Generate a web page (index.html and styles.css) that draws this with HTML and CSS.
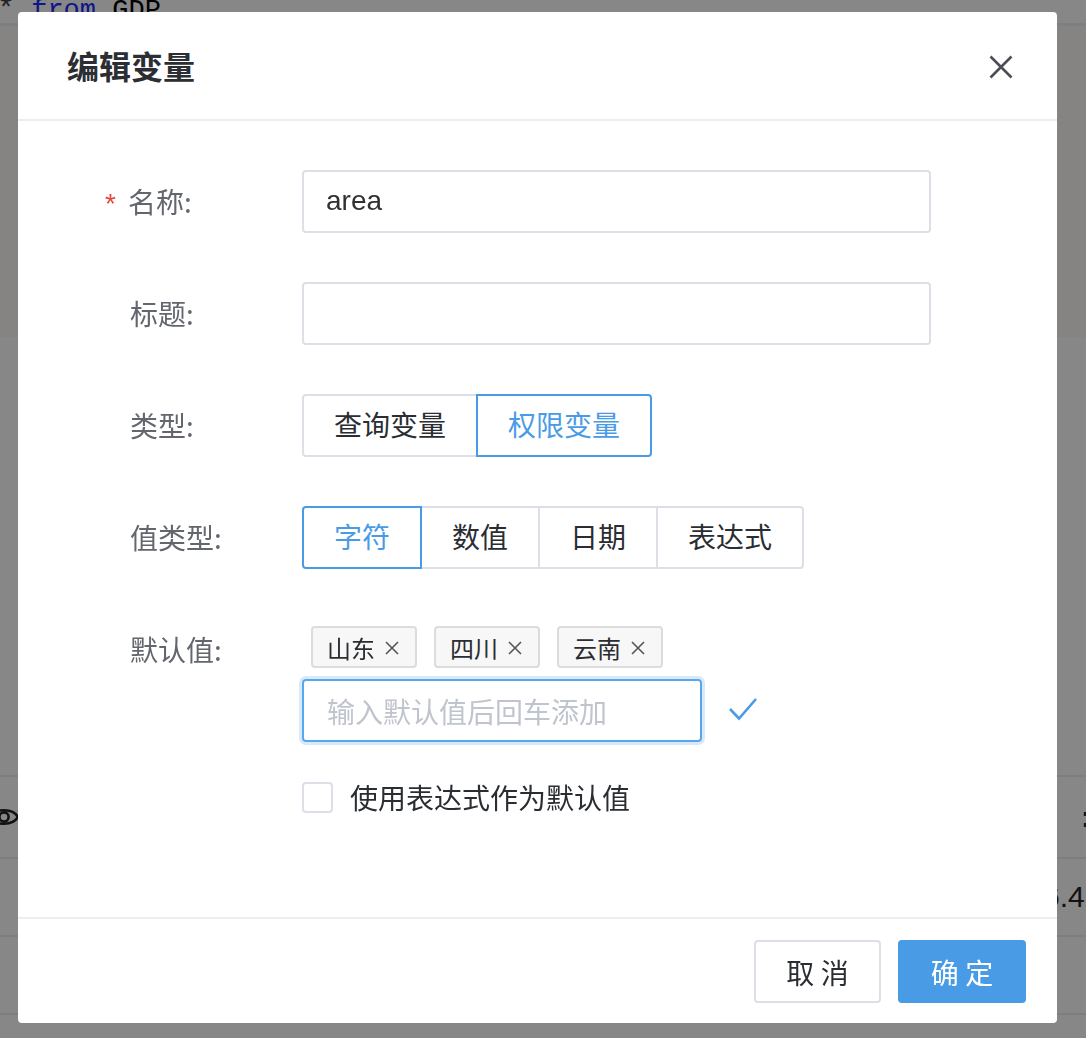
FILE: index.html
```html
<!DOCTYPE html>
<html lang="zh-CN">
<head>
<meta charset="utf-8">
<title>编辑变量</title>
<link rel="stylesheet" href="styles.css">
</head>
<body>
<div class="page">
  <div class="code"><div class="code-line"><span class="star">*</span> <span class="kw">from</span> GDP</div></div>
  <div class="upper"></div>
  <div class="table">
    <div class="trow first">
      <div class="cell-left">
        <svg class="eye" width="30" height="26" viewBox="0 0 30 26"><path d="M1 13 C6 4 24 4 29 13 C24 22 6 22 1 13 Z" fill="none" stroke="#222" stroke-width="2.6"/><circle cx="15" cy="13" r="4.6" fill="none" stroke="#222" stroke-width="2.6"/></svg>
      </div>
      <div class="cell-right"><span class="mark">:</span></div>
    </div>
    <div class="trow">
      <div class="cell-left"></div>
      <div class="cell-right"><span class="num">6.45</span></div>
    </div>
    <div class="trow"><div class="cell-left"></div><div class="cell-right"></div></div>
    <div class="trow last"><div class="cell-left"></div><div class="cell-right"></div></div>
  </div>
</div>

<div class="mask">
  <div class="dialog">
    <div class="dlg-header">
      <span class="dlg-title">编辑变量</span>
      <svg class="close" width="24" height="24" viewBox="0 0 24 24"><path d="M1.5 1.5 L22.5 22.5 M22.5 1.5 L1.5 22.5" stroke="#4a4f56" stroke-width="2.6" fill="none"/></svg>
    </div>

    <div class="dlg-body">
      <div class="form-row">
        <div class="label"><span class="req">*</span>名称:</div>
        <div class="control"><div class="input"><span class="val">area</span></div></div>
      </div>
      <div class="form-row">
        <div class="label">标题:</div>
        <div class="control"><div class="input"></div></div>
      </div>
      <div class="form-row">
        <div class="label">类型:</div>
        <div class="control">
          <div class="seg">
            <span class="seg-btn">查询变量</span>
            <span class="seg-btn active">权限变量</span>
          </div>
        </div>
      </div>
      <div class="form-row">
        <div class="label">值类型:</div>
        <div class="control">
          <div class="seg">
            <span class="seg-btn active">字符</span>
            <span class="seg-btn">数值</span>
            <span class="seg-btn">日期</span>
            <span class="seg-btn">表达式</span>
          </div>
        </div>
      </div>
      <div class="form-row">
        <div class="label">默认值:</div>
        <div class="control">
          <div class="tags">
            <span class="tag">山东<svg class="tag-x" width="14" height="14" viewBox="0 0 14 14"><path d="M1 1 L13 13 M13 1 L1 13" stroke="#555" stroke-width="1.6"/></svg></span>
            <span class="tag">四川<svg class="tag-x" width="14" height="14" viewBox="0 0 14 14"><path d="M1 1 L13 13 M13 1 L1 13" stroke="#555" stroke-width="1.6"/></svg></span>
            <span class="tag">云南<svg class="tag-x" width="14" height="14" viewBox="0 0 14 14"><path d="M1 1 L13 13 M13 1 L1 13" stroke="#555" stroke-width="1.6"/></svg></span>
          </div>
          <div class="add-row">
            <div class="input focus"><span class="placeholder">输入默认值后回车添加</span></div>
            <svg class="check" width="30" height="26" viewBox="0 0 30 26"><path d="M2 13 L11 22.5 L28 3" stroke="#4a9be6" stroke-width="2.6" fill="none"/></svg>
          </div>
          <div class="check-row">
            <span class="checkbox"></span>
            <span class="check-label">使用表达式作为默认值</span>
          </div>
        </div>
      </div>
    </div>

    <div class="dlg-footer">
      <span class="btn">取 消</span>
      <span class="btn primary">确 定</span>
    </div>
  </div>
</div>
</body>
</html>
```

FILE: styles.css
```css
* { box-sizing: border-box; }

html, body {
  margin: 0;
  padding: 0;
  width: 1086px;
  height: 1038px;
  overflow: hidden;
  background: #fff;
  font-family: "Liberation Sans", "Noto Sans CJK SC", sans-serif;
}

/* ---------- background page ---------- */
.page {
  width: 1140px;
  height: 1038px;
  overflow: hidden;
}

.code {
  height: 26px;
  border-bottom: 3px solid #f0f0f0;
  overflow: hidden;
}
.code-line {
  margin-top: -5px;
  margin-left: -3px;
  font-family: "Liberation Mono", monospace;
  font-size: 27px;
  line-height: 30px;
  color: #000;
  white-space: pre;
}
.code .star { color: #444; font-size: 30px; }
.code .kw { color: #1a2dff; }

.upper {
  height: 311px;
  background: #fdf9f6;
}

.table {
  margin-top: 438px;
}

.trow {
  display: grid;
  grid-template-columns: 1053px 1fr;
  border-top: 2px solid #eceef2;
  height: 78px;
}
.trow.first { height: 82px; }
.trow.last { height: 30px; }

.cell-left {
  display: flex;
  align-items: center;
}
.eye {
  margin-left: -11px;
}
.cell-right {
  display: flex;
  align-items: center;
  font-size: 30px;
  color: #222;
}
.mark {
  margin-left: 28px;
  font-weight: bold;
}
.num {
  margin-left: -10px;
}

/* ---------- mask & dialog ---------- */
.mask {
  position: fixed;
  inset: 0;
  background: rgba(0, 0, 0, 0.47);
  padding: 12px 29px 15px 18px;
}

.dialog {
  width: 1039px;
  height: 1011px;
  background: #fff;
  border-radius: 4px;
  display: flex;
  flex-direction: column;
}

.dlg-header {
  height: 109px;
  border-bottom: 2px solid #eeeeee;
  display: flex;
  align-items: center;
  justify-content: space-between;
  padding: 0 44px 0 49px;
}
.dlg-title {
  font-size: 32px;
  font-weight: 600;
  color: #2b2f33;
  font-family: "Noto Sans CJK SC", sans-serif;
  margin-top: -2px;
}
.close { margin-top: 2px; }

.dlg-body {
  padding: 49px 0 0 112px;
}

.form-row {
  display: flex;
  align-items: flex-start;
  margin-bottom: 49px;
}

.label {
  width: 172px;
  height: 63px;
  line-height: 63px;
  font-size: 28px;
  color: #63676d;
  font-family: "Noto Sans CJK SC", sans-serif;
  white-space: nowrap;
}
.req {
  color: #e5483a;
  margin-left: -25px;
  margin-right: 12px;
  font-family: "Liberation Sans", sans-serif;
  font-size: 28px;
}

.control {
  display: flex;
  flex-direction: column;
}

.input {
  width: 629px;
  height: 63px;
  border: 2px solid #dcdfe6;
  border-radius: 4px;
  display: flex;
  align-items: center;
  padding: 0 22px;
  font-size: 28px;
  color: #303133;
}
.val { margin-top: -2px; }

.input.focus {
  width: 400px;
  border-color: #58a6ec;
  box-shadow: 0 0 0 3px #d8e9fb;
}
.placeholder {
  color: #c0c4cc;
  font-family: "Noto Sans CJK SC", sans-serif;
  margin-left: 1px;
}

/* segmented */
.seg {
  display: flex;
}
.seg-btn {
  height: 63px;
  line-height: 57px;
  padding: 0 30px;
  border: 2px solid #dcdfe6;
  font-size: 28px;
  color: #2a2d31;
  font-family: "Noto Sans CJK SC", sans-serif;
  background: #fff;
  position: relative;
}
.seg-btn + .seg-btn { margin-left: -2px; }
.seg-btn:first-child { border-radius: 4px 0 0 4px; }
.seg-btn:last-child { border-radius: 0 4px 4px 0; }
.seg-btn.active {
  border-color: #4a9be6;
  color: #4a9be6;
  z-index: 1;
}

/* tags */
.tags {
  display: flex;
  gap: 17px;
  padding: 8px 0 0 9px;
}
.tag {
  height: 42px;
  display: inline-flex;
  align-items: center;
  gap: 10px;
  padding: 0 16px 0 14px;
  border: 2px solid #dcdcdc;
  border-radius: 4px;
  background: #f7f7f7;
  font-size: 24px;
  color: #2a2d31;
  font-family: "Noto Sans CJK SC", sans-serif;
}
.tag-x { margin-top: 1px; }

.add-row {
  display: flex;
  align-items: center;
  margin-top: 11px;
}
.check {
  margin-left: 26px;
  margin-top: -4px;
}

.check-row {
  display: flex;
  align-items: center;
  margin-top: 35px;
}
.checkbox {
  width: 31px;
  height: 31px;
  border: 2px solid #dcdfe6;
  border-radius: 4px;
}
.check-label {
  margin-left: 17px;
  font-size: 28px;
  color: #2a2d31;
  font-family: "Noto Sans CJK SC", sans-serif;
}

/* footer */
.dlg-footer {
  margin-top: auto;
  border-top: 2px solid #eeeeee;
  padding: 21px 31px 20px 0;
  display: flex;
  justify-content: flex-end;
  gap: 17px;
}
.btn {
  width: 127px;
  height: 63px;
  border: 2px solid #dcdfe6;
  border-radius: 4px;
  display: flex;
  align-items: center;
  justify-content: center;
  font-size: 28px;
  color: #2a2d31;
  font-family: "Noto Sans CJK SC", sans-serif;
  white-space: pre;
}
.btn.primary {
  width: 128px;
  background: #4a9be6;
  border-color: #4a9be6;
  color: #fff;
}
```
